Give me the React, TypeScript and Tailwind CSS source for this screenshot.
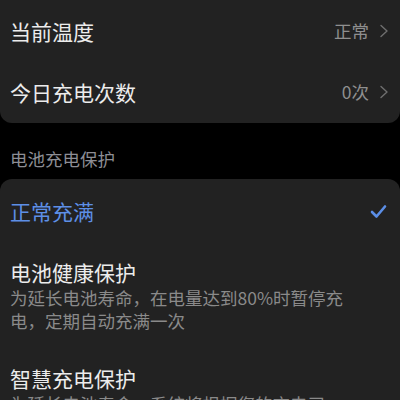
import React from "react";

const font = { fontFamily: '"Noto Sans CJK SC", "Noto Sans", sans-serif' };

const Chevron = () => (
  <svg width="10" height="14" viewBox="0 0 10 14" className="ml-[10px]">
    <path d="M2 1.5 L8 7 L2 12.5" fill="none" stroke="#6f6f6f" strokeWidth="1.4" strokeLinecap="round" strokeLinejoin="round" />
  </svg>
);

const Check = () => (
  <svg width="17" height="15" viewBox="0 0 17 15">
    <path d="M2 8 L6.5 12.5 L15 2.5" fill="none" stroke="#5b8ee6" strokeWidth="2.6" strokeLinecap="round" strokeLinejoin="round" />
  </svg>
);

const InfoRow = ({ label, value, h }: { label: string; value: string; h: string }) => (
  <div className={`flex items-center justify-between pl-[10px] pr-[11px] ${h}`}>
    <span className="text-[21px] text-[#ececec] leading-[28px]">{label}</span>
    <div className="flex items-center">
      <span className="text-[17.5px] text-[#8f8f8f] leading-[24px]">{value}</span>
      <Chevron />
    </div>
  </div>
);

export default function App() {
  return (
    <div className="w-[400px] h-[400px] overflow-hidden bg-black" style={font}>
      <div className="bg-[#222222] rounded-b-[12px]">
        <InfoRow label="当前温度" value="正常" h="h-[61px]" />
        <InfoRow label="今日充电次数" value="0次" h="h-[62px]" />
      </div>

      <div className="h-[56px] pt-[24px] pl-[10px]">
        <span className="text-[17.5px] leading-[22px] text-[#8d8e95]">电池充电保护</span>
      </div>

      <div className="bg-[#222222] rounded-t-[12px]">
        <div className="h-[64px] flex items-center justify-between pl-[10px] pr-[13px]">
          <span className="text-[21px] leading-[28px] text-[#5d8fe6]">正常充满</span>
          <Check />
        </div>

        <div className="pl-[10px] pr-[50px] pt-[15px]">
          <div className="text-[21px] leading-[28px] text-[#ececec]">电池健康保护</div>
          <div className="text-[17.5px] leading-[23px] text-[#8a8a8a]">
            为延长电池寿命，在电量达到80%时暂停充电，定期自动充满一次
          </div>
        </div>

        <div className="pl-[10px] pr-[50px] pt-[32px]">
          <div className="text-[21px] leading-[28px] text-[#ececec]">智慧充电保护</div>
          <div className="text-[17.5px] leading-[23px] text-[#8a8a8a]">
            为延长电池寿命，系统将根据您的充电习惯，智能调整充电策略
          </div>
        </div>
      </div>
    </div>
  );
}
